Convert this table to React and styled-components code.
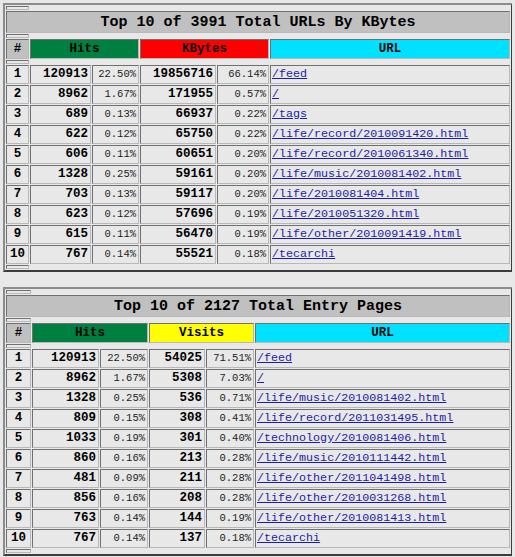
import styled, { createGlobalStyle } from 'styled-components'

const GlobalStyle = createGlobalStyle`
  body {
    margin: 3px;
    background: #e8e8e8;
    font-family: "Liberation Mono", "DejaVu Sans Mono", monospace;
    color: #000;
  }
`

const Table = styled.table`
  width: 510px;
  table-layout: fixed;
  border-collapse: separate;
  border-spacing: 1px;
  border: 2px solid;
  border-color: #8c8c8c #3c3c3c #3c3c3c #8c8c8c;
  background: #e8e8e8;
  margin: 0 0 15px 0;
`

const Cell = styled.td`
  border: 1px solid;
  border-color: #707070 #b8b8b8 #b8b8b8 #707070;
  padding: 0 2px;
  height: 17px;
  line-height: 17px;
  white-space: nowrap;
  overflow: hidden;
`

const Spacer = styled.th`
  border: 1px solid;
  border-color: #707070 #b8b8b8 #b8b8b8 #707070;
  padding: 0;
  height: 2px;
  line-height: 0;
`

const Title = styled.th`
  border: 1px solid;
  border-color: #707070 #b8b8b8 #b8b8b8 #707070;
  background: #c0c0c0;
  height: 19px;
  padding: 1px 0 0 0;
  font-size: 15px;
  line-height: 19px;
  font-weight: bold;
  text-align: center;
`

const Head = styled.th`
  border: 1px solid;
  border-color: #707070 #b8b8b8 #b8b8b8 #707070;
  background: ${p => p.$bg || '#c0c0c0'};
  height: 18px;
  padding: 0;
  font-size: 12.5px;
  line-height: 18px;
  font-weight: bold;
  text-align: center;
`

const Rank = styled(Cell)`
  text-align: center;
  font-weight: bold;
  font-size: 12.5px;
`

const Count = styled(Cell)`
  text-align: right;
  font-weight: bold;
  font-size: 12.5px;
`

const Pct = styled(Cell)`
  text-align: right;
  font-size: 10.5px;
  color: #222;
`

const UrlCell = styled(Cell)`
  text-align: left;
  padding: 0 1px;
  font-size: 11.7px;

  a {
    color: #1c1ca8;
    text-decoration: underline;
  }
`

const kbytesRows = [
  [120913, '22.50%', 19856716, '66.14%', '/feed'],
  [8962, '1.67%', 171955, '0.57%', '/'],
  [689, '0.13%', 66937, '0.22%', '/tags'],
  [622, '0.12%', 65750, '0.22%', '/life/record/2010091420.html'],
  [606, '0.11%', 60651, '0.20%', '/life/record/2010061340.html'],
  [1328, '0.25%', 59161, '0.20%', '/life/music/2010081402.html'],
  [703, '0.13%', 59117, '0.20%', '/life/2010081404.html'],
  [623, '0.12%', 57696, '0.19%', '/life/2010051320.html'],
  [615, '0.11%', 56470, '0.19%', '/life/other/2010091419.html'],
  [767, '0.14%', 55521, '0.18%', '/tecarchi'],
]

const entryRows = [
  [120913, '22.50%', 54025, '71.51%', '/feed'],
  [8962, '1.67%', 5308, '7.03%', '/'],
  [1328, '0.25%', 536, '0.71%', '/life/music/2010081402.html'],
  [809, '0.15%', 308, '0.41%', '/life/record/2011031495.html'],
  [1033, '0.19%', 301, '0.40%', '/technology/2010081406.html'],
  [860, '0.16%', 213, '0.28%', '/life/music/2010111442.html'],
  [481, '0.09%', 211, '0.28%', '/life/other/2011041498.html'],
  [856, '0.16%', 208, '0.28%', '/life/other/2010031268.html'],
  [763, '0.14%', 144, '0.19%', '/life/other/2010081413.html'],
  [767, '0.14%', 137, '0.18%', '/tecarchi'],
]

const TopTable = ({ title, metric, metricColor, widths, rows }) => (
  <Table>
    <colgroup>
      {widths.map((w, i) => <col key={i} style={{ width: w }} />)}
      <col />
    </colgroup>
    <tbody>
      <tr><Spacer /></tr>
      <tr><Title colSpan={6}>{title}</Title></tr>
      <tr><Spacer /></tr>
      <tr>
        <Head>#</Head>
        <Head $bg="#008040" colSpan={2}>Hits</Head>
        <Head $bg={metricColor} colSpan={2}>{metric}</Head>
        <Head $bg="#00e0ff">URL</Head>
      </tr>
      <tr><Spacer /></tr>
      {rows.map((r, i) => (
        <tr key={i}>
          <Rank>{i + 1}</Rank>
          <Count>{r[0]}</Count>
          <Pct>{r[1]}</Pct>
          <Count>{r[2]}</Count>
          <Pct>{r[3]}</Pct>
          <UrlCell><a href="#">{r[4]}</a></UrlCell>
        </tr>
      ))}
      <tr><Spacer /></tr>
    </tbody>
  </Table>
)

export default function App() {
  return (
    <>
      <GlobalStyle />
      <TopTable
        title="Top 10 of 3991 Total URLs By KBytes"
        metric="KBytes"
        metricColor="#ff0000"
        widths={[23, 61, 47, 76, 52]}
        rows={kbytesRows}
      />
      <TopTable
        title="Top 10 of 2127 Total Entry Pages"
        metric="Visits"
        metricColor="#ffff00"
        widths={[25, 67, 48, 56, 48]}
        rows={entryRows}
      />
    </>
  )
}
